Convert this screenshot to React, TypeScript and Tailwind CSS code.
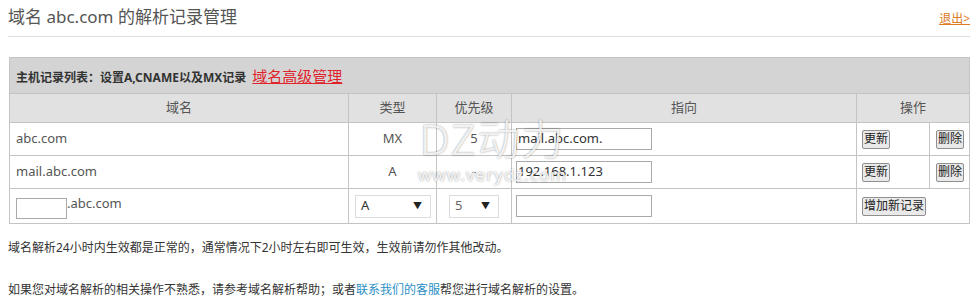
import React from 'react';

const font = { fontFamily: '"Noto Sans", "Noto Sans CJK SC", sans-serif' };

const records = [
  { host: 'abc.com', type: 'MX', priority: '5', value: 'mail.abc.com.' },
  { host: 'mail.abc.com', type: 'A', priority: '-', value: '192.168.1.123' },
];

function Btn({ children }: { children: React.ReactNode }) {
  return (
    <button className="h-[19px] px-[1px] whitespace-nowrap text-[12px] leading-none text-[#222] bg-[#e9e9e9] border border-[#8f8f8f] rounded-[2px]">
      {children}
    </button>
  );
}

function Select({ value, width }: { value: string; width: string }) {
  return (
    <div className={`${width} h-[23px] flex items-center justify-between pl-[5px] pr-[8px] border border-[#dcdcdc] bg-white text-[13px] text-[#333]`}>
      <span className={value === '5' ? 'text-[#666]' : ''}>{value}</span>
      <span className="text-[9px] text-[#222]">▼</span>
    </div>
  );
}

export default function App() {
  return (
    <div className="relative w-[978px] h-[308px] bg-white overflow-hidden" style={font}>
      <div className="px-2">
        <div className="h-[37px] flex items-center justify-between border-b border-[#dedede]">
          <h1 className="text-[17px] text-[#555] font-normal -mt-[3px]">域名 abc.com 的解析记录管理</h1>
          <a className="text-[12px] text-[#dd7a24] underline mt-[2px]">退出&gt;</a>
        </div>
      </div>

      <table className="ml-[9px] mt-[20px] w-[960px] table-fixed border-collapse text-[13px] text-[#555]">
        <colgroup>
          <col className="w-[339px]" />
          <col className="w-[88px]" />
          <col className="w-[75px]" />
          <col className="w-[345px]" />
          <col className="w-[73px]" />
          <col className="w-[40px]" />
        </colgroup>
        <tbody>
          <tr className="h-[36px] bg-[#d4d4d4]">
            <td colSpan={6} className="border border-[#c4c4c4] px-[6px] pt-[2px]">
              <span className="font-bold text-[#333] text-[12px]">主机记录列表：设置A,CNAME以及MX记录</span>
              <a className="ml-[6px] text-[15px] text-[#e0222b] underline">域名高级管理</a>
            </td>
          </tr>
          <tr className="h-[29px] bg-[#e1e1e1] text-[#555]">
            <td className="border border-[#c4c4c4] text-center">域名</td>
            <td className="border border-[#c4c4c4] text-center">类型</td>
            <td className="border border-[#c4c4c4] text-center">优先级</td>
            <td className="border border-[#c4c4c4] text-center">指向</td>
            <td colSpan={2} className="border border-[#c4c4c4] text-center">操作</td>
          </tr>
          {records.map((r) => (
            <tr key={r.host} className="h-[33px]">
              <td className="border border-[#c4c4c4] px-[6px]">{r.host}</td>
              <td className="border border-[#c4c4c4] text-center">{r.type}</td>
              <td className="border border-[#c4c4c4] text-center">{r.priority}</td>
              <td className="border border-[#c4c4c4] px-[4px]">
                <div className="w-[136px] h-[22px] border border-[#a9a9a9] flex items-center px-[1px] text-[13px] text-[#333]">
                  {r.value}
                </div>
              </td>
              <td className="border border-[#c4c4c4] px-[5px]">
                <Btn>更新</Btn>
              </td>
              <td className="border border-[#c4c4c4] px-[6px]">
                <Btn>删除</Btn>
              </td>
            </tr>
          ))}
          <tr className="h-[35px]">
            <td className="border border-[#c4c4c4] px-[6px]">
              <div className="flex items-center">
                <div className="w-[51px] h-[21px] border border-[#a9a9a9] -mb-[4px]" />
                <span className="-mt-[4px]">.abc.com</span>
              </div>
            </td>
            <td className="border border-[#c4c4c4] px-[6px]">
              <Select value="A" width="w-[76px]" />
            </td>
            <td className="border border-[#c4c4c4] px-[12px]">
              <Select value="5" width="w-[50px]" />
            </td>
            <td className="border border-[#c4c4c4] px-[4px]">
              <div className="w-[136px] h-[22px] border border-[#a9a9a9]" />
            </td>
            <td colSpan={2} className="border border-[#c4c4c4] px-[5px]">
              <Btn>增加新记录</Btn>
            </td>
          </tr>
        </tbody>
      </table>

      <div className="px-2 text-[12px] text-[#333]">
        <p className="mt-[15px]">域名解析24小时内生效都是正常的，通常情况下2小时左右即可生效，生效前请勿作其他改动。</p>
        <p className="mt-[24px]">
          如果您对域名解析的相关操作不熟悉，请参考域名解析帮助；或者<a className="text-[#2b8fc4]">联系我们的客服</a>帮您进行域名解析的设置。
        </p>
      </div>

      <div className="absolute left-[418px] top-[118px] w-max flex flex-col items-center whitespace-nowrap pointer-events-none">
        <span className="text-[42px] font-light leading-none text-white/85 tracking-[2px] [text-shadow:0_0_2px_rgba(0,0,0,0.45)]">DZ动力</span>
        <span className="text-[17px] leading-none mt-[6px] text-white/85 tracking-[1px] [text-shadow:0_0_2px_rgba(0,0,0,0.45)]">www.verydz.com</span>
      </div>
    </div>
  );
}
